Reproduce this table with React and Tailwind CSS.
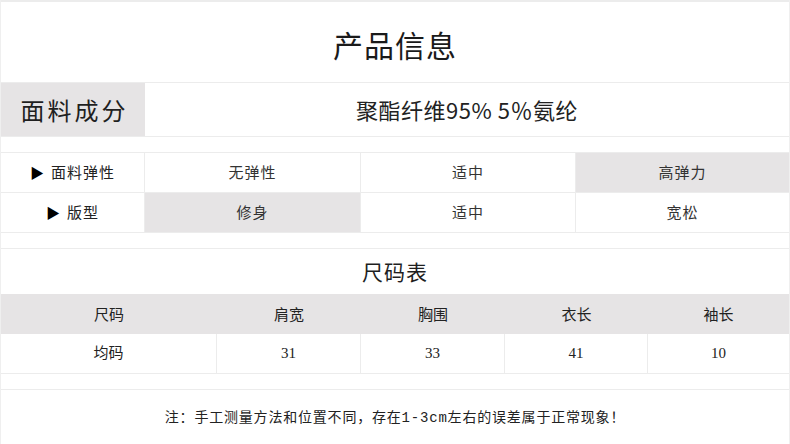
const cjk = "font-['Noto_Sans_CJK_SC','Noto_Sans',sans-serif]";
const song = "font-['Liberation_Serif','Noto_Sans_CJK_SC',serif]";

const specRows = [
  { label: "面料弹性", cells: ["无弹性", "适中", "高弹力"], active: 2 },
  { label: "版型", cells: ["修身", "适中", "宽松"], active: 0 },
];

const sizeHead = ["尺码", "肩宽", "胸围", "衣长", "袖长"];
const sizeRow = ["均码", "31", "33", "41", "10"];

const Spacer = () => <div className="h-[16px] border-b border-[#ececec]" />;

export default function App() {
  return (
    <div className={`w-[790px] h-[444px] overflow-hidden bg-white text-[#333] ${cjk}`}>
      <div className="border-l border-r border-[#efefef]">
        <div className="h-[83px] border-t-2 border-b border-[#ececec] flex items-center justify-center pt-[4px]">
          <span className="text-[30px] text-[#1a1a1a] tracking-[1px]">产品信息</span>
        </div>

        <div className="h-[54px] grid grid-cols-[144px_1fr] border-b border-[#ececec]">
          <div className="bg-[#e6e4e5] flex items-center justify-center pl-[3px] text-[24px] text-[#1f1f1f] tracking-[3px]">
            面料成分
          </div>
          <div className="flex items-center justify-center text-[22px] text-[#222] tracking-[0.5px]">
            聚酯纤维95% 5％氨纶
          </div>
        </div>

        <Spacer />

        {specRows.map((row) => (
          <div
            key={row.label}
            className="h-[40px] grid grid-cols-[144px_216px_215px_1fr] border-b border-[#ececec] text-[15px]"
          >
            <div className="flex items-center justify-center gap-[6px] border-r border-[#ececec] text-[#222] tracking-[1px]">
              <span className="text-[14px] text-black">▶</span>
              <span>{row.label}</span>
            </div>
            {row.cells.map((c, i) => (
              <div
                key={c + i}
                className={`flex items-center justify-center tracking-[1px] ${i < 2 ? "border-r border-[#ececec]" : ""} ${
                  i === row.active ? "bg-[#e6e4e5]" : ""
                }`}
              >
                {c}
              </div>
            ))}
          </div>
        ))}

        <Spacer />

        <div className="h-[45px] flex items-center justify-center text-[21px] text-[#1f1f1f] tracking-[1px]">
          尺码表
        </div>

        <div className="h-[40px] grid grid-cols-[216px_144px_144px_143px_1fr] bg-[#e6e4e5] text-[15px] text-[#222]">
          {sizeHead.map((h) => (
            <div key={h} className="flex items-center justify-center">
              {h}
            </div>
          ))}
        </div>
        <div className={`h-[40px] grid grid-cols-[216px_144px_144px_143px_1fr] border-b border-[#ececec] text-[15px] text-[#222] ${song}`}>
          {sizeRow.map((v, i) => (
            <div
              key={i}
              className={`flex items-center justify-center ${i < 4 ? "border-r border-[#ececec]" : ""}`}
            >
              {v}
            </div>
          ))}
        </div>

        <Spacer />

        <div className="h-[55px] flex items-center justify-center pt-[2px]">
          <span className="text-[14px] text-[#222] tracking-[0.8px] font-['Liberation_Mono','Noto_Sans_CJK_SC',monospace]">
            注：手工测量方法和位置不同，存在1-3cm左右的误差属于正常现象！
          </span>
        </div>
      </div>
    </div>
  );
}
